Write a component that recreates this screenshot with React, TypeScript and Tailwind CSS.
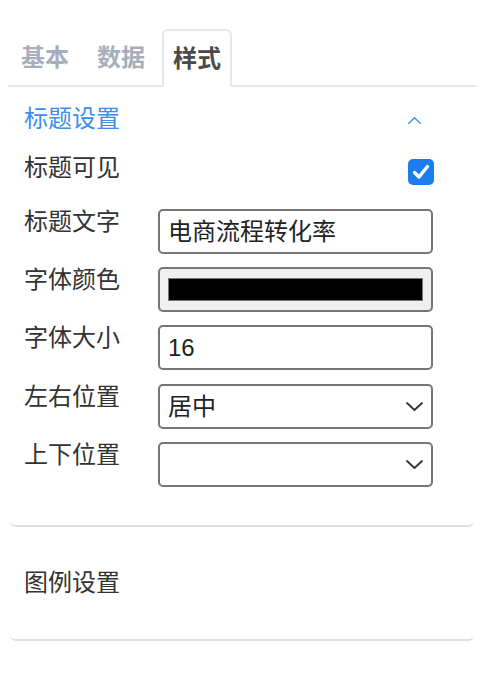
import React, { useState } from 'react';

const tabs = ['基本', '数据', '样式'];

const Chevron: React.FC<{ up?: boolean; className?: string }> = ({ up, className }) => (
  <svg viewBox="0 0 17 9" className={className} fill="none">
    <path
      d={up ? 'M1 8 L8.5 1 L16 8' : 'M1 1 L8.5 8 L16 1'}
      stroke="currentColor"
      strokeWidth="1.8"
      strokeLinecap="round"
      strokeLinejoin="round"
    />
  </svg>
);

const Row: React.FC<{ label: string; children: React.ReactNode; className?: string }> = ({
  label,
  children,
  className = '',
}) => (
  <div className={`flex items-start ${className}`}>
    <div className="w-[134px] shrink-0 leading-[26px] text-[#333]">{label}</div>
    {children}
  </div>
);

const box = 'w-[275px] h-[45px] border-2 border-[#767676] rounded-[5px] flex items-center px-[8px] text-[#222]';

export default function App() {
  const [active, setActive] = useState(2);
  const [visible, setVisible] = useState(true);

  return (
    <div className="w-full h-[678px] bg-white pt-[29px] pl-[8px] pr-[2px] text-[24px] font-['Liberation_Sans','Noto_Sans_CJK_SC',sans-serif]">
      {/* tabs */}
      <div className="flex gap-[6px] pl-[2px] border-b-2 border-[#e4e7ed]">
        {tabs.map((t, i) => (
          <button
            key={t}
            onClick={() => setActive(i)}
            className={`w-[70px] h-[58px] -mb-[2px] flex items-center justify-center font-bold rounded-t-[6px] ${
              i === active
                ? 'border-2 border-b-0 border-[#e4e7ed] bg-white text-[#4a4a4a]'
                : 'text-[#a7aebb]'
            }`}
          >
            {t}
          </button>
        ))}
      </div>

      {/* 标题设置 */}
      <div className="mx-[2px] px-[14px] pb-[38px] border-b-2 border-[#dce1e8] rounded-[6px]">
        <div className="h-[64px] flex items-center justify-between">
          <span className="text-[#3d8eed]">标题设置</span>
          <Chevron up className="w-[13px] h-[7px] mr-[39px] mt-[2px] text-[#3d8eed]" />
        </div>

        <div className="flex items-start justify-between">
          <div className="mt-[4px] leading-[26px] text-[#333]">标题可见</div>
          <button
            onClick={() => setVisible(!visible)}
            className={`mt-[8px] mr-[26px] w-[26px] h-[26px] rounded-[5px] flex items-center justify-center ${
              visible ? 'bg-[#1d7bf0]' : 'border-2 border-[#767676] bg-white'
            }`}
          >
            {visible && (
              <svg viewBox="0 0 26 26" className="w-[26px] h-[26px]" fill="none">
                <path d="M6.5 13.5 L11 18 L19.5 7.5" stroke="white" strokeWidth="3.4" strokeLinecap="round" strokeLinejoin="round" />
              </svg>
            )}
          </button>
        </div>

        <Row label="标题文字" className="mt-[24px]">
          <div className={box}>电商流程转化率</div>
        </Row>

        <Row label="字体颜色" className="mt-[13px]">
          <div className="w-[275px] h-[45px] border-2 border-[#767676] rounded-[5px] bg-[#efefef] px-[8px] py-[9px]">
            <div className="w-full h-full bg-black border border-[#777]" />
          </div>
        </Row>

        <Row label="字体大小" className="mt-[13px]">
          <div className={box}>16</div>
        </Row>

        <Row label="左右位置" className="mt-[14px]">
          <div className={`${box} justify-between`}>
            <span>居中</span>
            <Chevron className="w-[17px] h-[9px] text-[#333]" />
          </div>
        </Row>

        <Row label="上下位置" className="mt-[13px]">
          <div className={`${box} justify-end`}>
            <Chevron className="w-[17px] h-[9px] text-[#333]" />
          </div>
        </Row>
      </div>

      {/* 图例设置 */}
      <div className="mx-[2px] px-[14px] h-[114px] flex items-center border-b-2 border-[#dce1e8] rounded-[6px]">
        <span className="text-[#333]">图例设置</span>
      </div>
    </div>
  );
}
